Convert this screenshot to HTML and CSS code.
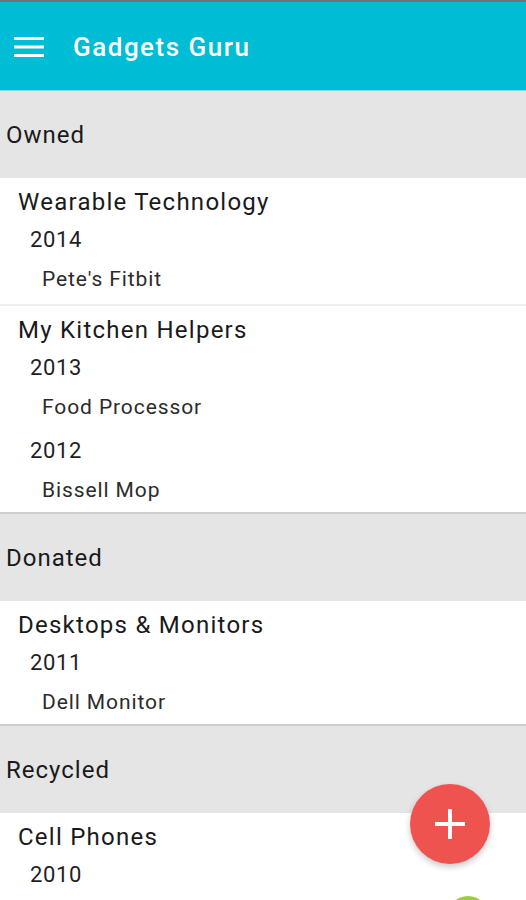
FILE: index.html
```html
<!DOCTYPE html>
<html>
<head>
<meta charset="utf-8">
<link rel="stylesheet" href="styles.css">
</head>
<body>
<div class="screen">
  <div class="statusbar"></div>
  <header class="toolbar">
    <svg class="menu" width="30" height="22" viewBox="0 0 30 22">
      <rect x="0" y="1" width="30" height="3" fill="#fff"/>
      <rect x="0" y="9.5" width="30" height="3" fill="#fff"/>
      <rect x="0" y="18" width="30" height="3" fill="#fff"/>
    </svg>
    <span class="title">Gadgets Guru</span>
  </header>
  <main class="list">
    <div class="section first">Owned</div>
    <div class="group">
      <div class="cat">Wearable Technology</div>
      <div class="year">2014</div>
      <div class="item">Pete's Fitbit</div>
    </div>
    <div class="sep"></div>
    <div class="group">
      <div class="cat">My Kitchen Helpers</div>
      <div class="year">2013</div>
      <div class="item">Food Processor</div>
      <div class="year next">2012</div>
      <div class="item">Bissell Mop</div>
    </div>
    <div class="section">Donated</div>
    <div class="group">
      <div class="cat">Desktops &amp; Monitors</div>
      <div class="year">2011</div>
      <div class="item">Dell Monitor</div>
    </div>
    <div class="section">Recycled</div>
    <div class="group">
      <div class="cat">Cell Phones</div>
      <div class="year">2010</div>
    </div>
  </main>
  <button class="fab" aria-label="Add">
    <svg width="30" height="30" viewBox="0 0 30 30">
      <rect x="13" y="0" width="4" height="30" fill="#fff"/>
      <rect x="0" y="13" width="30" height="4" fill="#fff"/>
    </svg>
  </button>
  <div class="fab2"></div>
</div>
</body>
</html>
```
FILE: styles.css
```css
* { box-sizing: border-box; }
html, body { margin: 0; padding: 0; }
body {
  width: 526px;
  height: 900px;
  overflow: hidden;
  background: #fff;
  font-family: Roboto, "Noto Sans", sans-serif;
  color: #212121;
}
.screen {
  position: relative;
  width: 526px;
  height: 900px;
  overflow: hidden;
}
.statusbar {
  height: 2px;
  background: #6b7375;
}
.toolbar {
  height: 89px;
  background: #00bcd4;
  border-bottom: 1px solid #7fd9e6;
  display: flex;
  align-items: center;
  padding-left: 14px;
  padding-top: 2px;
}
.menu { display: block; margin-right: 29px; }
.title {
  color: #fff;
  font-size: 26px;
  font-weight: 500;
  letter-spacing: 1.5px;
}
.list { display: flex; flex-direction: column; }
.section {
  height: 89px;
  background: #e5e5e5;
  border-top: 2px solid #cdcdcd;
  display: flex;
  align-items: center;
  padding-left: 6px;
  font-size: 24px;
  letter-spacing: 1px;
  color: #1a1a1a;
}
.section.first {
  height: 87px;
  border-top: none;
}
.group {
  padding-top: 5px;
  padding-bottom: 2px;
}
.cat {
  height: 38px;
  line-height: 38px;
  padding-left: 18px;
  font-size: 24px;
  letter-spacing: 1.25px;
  color: #1a1a1a;
}
.year {
  height: 38px;
  line-height: 38px;
  padding-left: 30px;
  font-size: 22px;
  letter-spacing: 0.6px;
  color: #1f1f1f;
}
.year.next { margin-top: 5px; }
.item {
  height: 40px;
  line-height: 40px;
  padding-left: 42px;
  font-size: 21px;
  letter-spacing: 0.9px;
  color: #2b2b2b;
}
.sep {
  height: 2px;
  margin-top: 3px;
  background: #efefef;
}
.fab {
  position: absolute;
  left: 410px;
  top: 784px;
  width: 80px;
  height: 80px;
  border-radius: 50%;
  border: none;
  padding: 0;
  background: #ef5350;
  box-shadow: 0 3px 6px rgba(0,0,0,0.22);
  display: flex;
  align-items: center;
  justify-content: center;
}
.fab svg { display: block; }
.fab2 {
  position: absolute;
  left: 448px;
  top: 896px;
  width: 40px;
  height: 40px;
  border-radius: 50%;
  background: #9ccc3a;
}
```
